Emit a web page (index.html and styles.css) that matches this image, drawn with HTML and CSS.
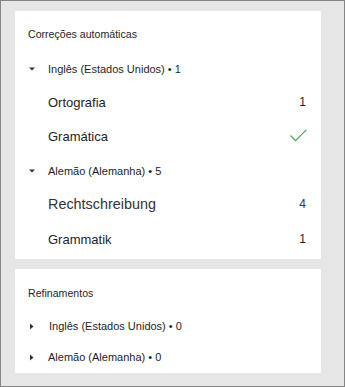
FILE: index.html
```html
<!DOCTYPE html>
<html lang="pt-BR">
<head>
    <meta charset="UTF-8">
    <meta name="viewport" content="width=device-width, initial-scale=1.0">
    <title>Revisão</title>
    <link rel="stylesheet" href="styles.css">
</head>
<body>
    <section class="card card-auto">
        <h3 class="card-title">Correções automáticas</h3>

        <div class="lang row-32">
            <svg class="caret" width="6" height="4" viewBox="0 0 6 4"><path d="M0 0.5h6L3 3.5z" fill="#333"/></svg>
            <span>Inglês (Estados Unidos) • 1</span>
        </div>
        <div class="item row-34">
            <span>Ortografia</span>
            <span class="count">1</span>
        </div>
        <div class="item row-35">
            <span>Gramática</span>
            <svg class="check" width="17" height="13" viewBox="0 0 17 13"><path d="M0.5 6.5l5 5.2L16.3 0.8" fill="none" stroke="#41a94a" stroke-width="1.1"/></svg>
        </div>

        <div class="lang row-33">
            <svg class="caret" width="6" height="4" viewBox="0 0 6 4"><path d="M0 0.5h6L3 3.5z" fill="#333"/></svg>
            <span>Alemão (Alemanha) • 5</span>
        </div>
        <div class="item item-big row-33">
            <span>Rechtschreibung</span>
            <span class="count">4</span>
        </div>
        <div class="item row-38">
            <span>Grammatik</span>
            <span class="count">1</span>
        </div>
    </section>

    <section class="card card-ref">
        <h3 class="card-title">Refinamentos</h3>

        <div class="lang row-32">
            <svg class="caret" width="6" height="7" viewBox="0 0 6 7"><path d="M1 0.5v6l3.5-3z" fill="#333"/></svg>
            <span class="shift">Inglês (Estados Unidos) • 0</span>
        </div>
        <div class="lang row-30">
            <svg class="caret" width="6" height="7" viewBox="0 0 6 7"><path d="M1 0.5v6l3.5-3z" fill="#333"/></svg>
            <span>Alemão (Alemanha) • 0</span>
        </div>
    </section>
</body>
</html>
```

FILE: styles.css
```css
*{
    box-sizing: border-box;
}

html, body{
    margin: 0;
}

body{
    height: 387px;
    border: 1px solid #858585;
    background-color: #e6e6e6;
    padding: 10px 23px 0 14px;
    font-family: "Liberation Sans", Arial, sans-serif;
    color: #1e1e1e;
}

.card{
    background-color: #fff;
    padding: 12px 14px 1px 13px;
}

.card-auto{
    height: 248px;
}

.card-ref{
    margin-top: 10px;
    height: 104px;
    padding-top: 13px;
}

.card-title{
    margin: 0 0 8px 0;
    height: 22px;
    line-height: 22px;
    font-size: 10.6px;
    font-weight: normal;
}

.card-ref .card-title{
    margin-bottom: 6px;
}

.lang{
    display: flex;
    align-items: center;
    font-size: 11px;
}

.caret{
    margin-left: 1px;
    margin-right: 13px;
    flex: none;
}

.shift{
    margin-left: 1px;
}

.item{
    display: flex;
    align-items: center;
    justify-content: space-between;
    padding-left: 20px;
    font-size: 13px;
}

.item-big{
    font-size: 14.4px;
    color: #333;
}

.count{
    font-size: 12px;
    margin-right: 1px;
}

.check{
    margin-top: -2px;
}

.row-30{ height: 30px; }
.row-32{ height: 32px; }
.row-33{ height: 33px; }
.row-34{ height: 34px; }
.row-35{ height: 35px; }
.row-38{ height: 38px; }
```
